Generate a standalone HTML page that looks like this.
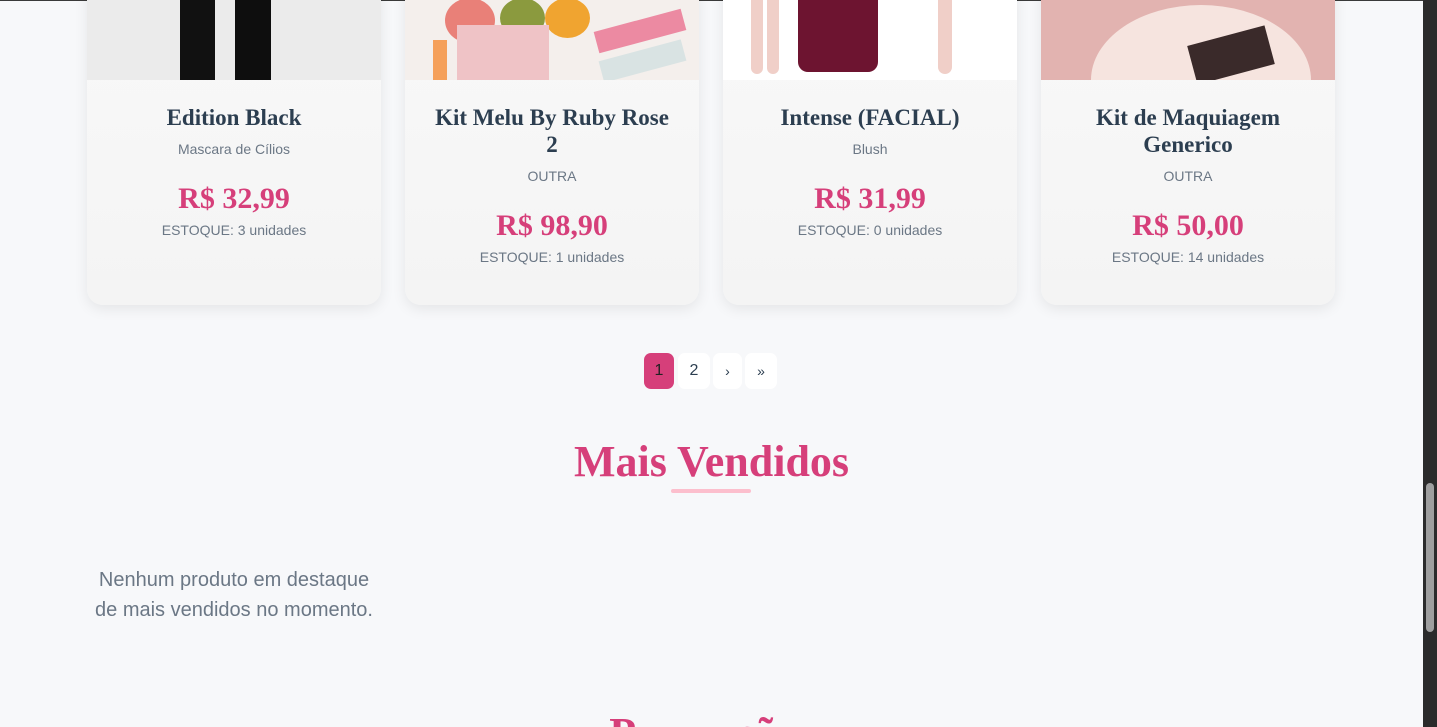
<!DOCTYPE html>
<html style="overflow:hidden;height:727px"><head><meta charset="utf-8"><style>
*{margin:0;padding:0;box-sizing:border-box}
body{width:1437px;height:727px;overflow:hidden;background:#f7f8fa;font-family:"Liberation Sans",sans-serif;position:relative}
.top{position:absolute;left:0;top:0;width:1423px;height:1px;background:#3a3a3a}
.sb{position:absolute;left:1423px;top:0;width:14px;height:727px;background:#2b2b2b}
.thumb{position:absolute;left:1426px;top:483px;width:8px;height:149px;background:#9f9f9f;border-radius:4px}
.card{position:absolute;top:-20px;width:294px;height:325px;border-radius:16px;overflow:hidden;background:linear-gradient(#f9f9f9,#f4f4f4);box-shadow:0 4px 14px rgba(0,0,0,.08)}
.img{position:absolute;left:0;top:0;width:294px;height:100px;overflow:hidden}
.t{position:absolute;left:0;width:294px;text-align:center}
.ti{font-family:"Liberation Serif",serif;font-weight:bold;font-size:23px;line-height:27px;color:#2c3e50;padding:0 28px}
.su{font-size:14px;color:#6b7785;line-height:17px}
.pr{font-family:"Liberation Serif",serif;font-weight:bold;font-size:30px;line-height:34px;color:#d63f7a}
.st{font-size:14px;color:#6b7785;line-height:17px}
.pg{position:absolute;top:353px;height:36px;border-radius:7px;background:#fff;text-align:center;line-height:36px;font-size:16px;color:#2c3e50}
h2{position:absolute;left:0;width:1423px;text-align:center;font-family:"Liberation Serif",serif;font-weight:bold;font-size:44px;color:#d63f7a}
</style></head><body>
<div class="top"></div>

<div class="card" style="left:87px">
 <div class="img" style="background:#ebebeb">
  <div style="position:absolute;left:93px;top:0;width:35px;height:100px;background:#111"></div>
  <div style="position:absolute;left:148px;top:0;width:36px;height:100px;background:#0e0e0e"></div>
 </div>
 <div class="t ti" style="top:124px">Edition Black</div>
 <div class="t su" style="top:161px">Mascara de Cílios</div>
 <div class="t pr" style="top:202px">R$ 32,99</div>
 <div class="t st" style="top:242px">ESTOQUE: 3 unidades</div>
</div>

<div class="card" style="left:405px">
 <div class="img" style="background:#f4efec">
  <div style="position:absolute;left:40px;top:18px;width:50px;height:45px;border-radius:50%;background:#e98078"></div>
  <div style="position:absolute;left:95px;top:18px;width:45px;height:40px;border-radius:50%;background:#8b9a3e"></div>
  <div style="position:absolute;left:140px;top:18px;width:45px;height:40px;border-radius:50%;background:#f0a430"></div>
  <div style="position:absolute;left:52px;top:45px;width:92px;height:55px;background:#efc3c6"></div>
  <div style="position:absolute;left:190px;top:40px;width:90px;height:22px;background:#ec8aa2;transform:rotate(-15deg)"></div>
  <div style="position:absolute;left:195px;top:70px;width:85px;height:22px;background:#d9e3e3;transform:rotate(-15deg)"></div>
  <div style="position:absolute;left:28px;top:60px;width:14px;height:40px;background:#f5a05a"></div>
 </div>
 <div class="t ti" style="top:124px">Kit Melu By Ruby Rose<br>2</div>
 <div class="t su" style="top:188px">OUTRA</div>
 <div class="t pr" style="top:229px">R$ 98,90</div>
 <div class="t st" style="top:269px">ESTOQUE: 1 unidades</div>
</div>

<div class="card" style="left:723px">
 <div class="img" style="background:#fff">
  <div style="position:absolute;left:28px;top:0;width:12px;height:94px;border-radius:6px;background:#f0cfc8"></div>
  <div style="position:absolute;left:44px;top:0;width:12px;height:94px;border-radius:6px;background:#f0cfc8"></div>
  <div style="position:absolute;left:75px;top:0;width:80px;height:92px;border-radius:0 0 10px 10px;background:#6d1430"></div>
  <div style="position:absolute;left:215px;top:0;width:14px;height:94px;border-radius:7px;background:#f0cfc8"></div>
 </div>
 <div class="t ti" style="top:124px">Intense (FACIAL)</div>
 <div class="t su" style="top:161px">Blush</div>
 <div class="t pr" style="top:202px">R$ 31,99</div>
 <div class="t st" style="top:242px">ESTOQUE: 0 unidades</div>
</div>

<div class="card" style="left:1041px">
 <div class="img" style="background:#e2b3b0">
  <div style="position:absolute;left:50px;top:25px;width:220px;height:150px;border-radius:50%;background:#f6e4df"></div>
  <div style="position:absolute;left:150px;top:55px;width:80px;height:40px;background:#3a2a2a;transform:rotate(-15deg)"></div>
 </div>
 <div class="t ti" style="top:124px">Kit de Maquiagem Generico</div>
 <div class="t su" style="top:188px">OUTRA</div>
 <div class="t pr" style="top:229px">R$ 50,00</div>
 <div class="t st" style="top:269px">ESTOQUE: 14 unidades</div>
</div>

<div class="pg" style="left:644px;width:30px;background:#d63f7a;color:#222">1</div>
<div class="pg" style="left:678px;width:32px">2</div>
<div class="pg" style="left:713px;width:29px;font-size:14px">›</div>
<div class="pg" style="left:745px;width:32px;font-size:14px">»</div>

<h2 style="top:436px;line-height:52px">Mais Vendidos</h2>
<div style="position:absolute;left:671px;top:489px;width:80px;height:4px;border-radius:2px;background:#fcbfcd"></div>

<div style="position:absolute;left:80px;top:565px;width:308px;text-align:center;font-size:20px;line-height:30px;color:#6b7785">Nenhum produto em destaque<br>de mais vendidos no momento.</div>

<h2 style="top:708px;line-height:52px">Promoções</h2>

<div class="sb"></div><div class="thumb"></div>
</body></html>
